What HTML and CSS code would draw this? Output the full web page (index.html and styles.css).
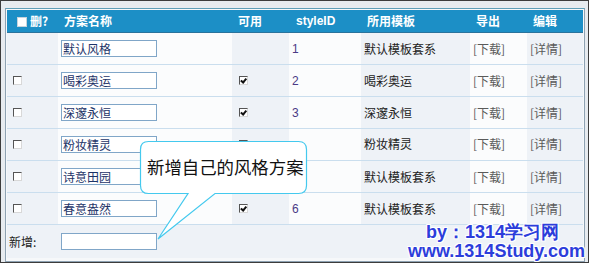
FILE: index.html
```html
<!DOCTYPE html>
<html>
<head>
    <meta charset="UTF-8">
    <title>风格方案管理</title>
    <link rel="stylesheet" href="styles.css">
</head>
<body>
    <div class="frame">
        <div class="panel">
            <table class="styles">
                <colgroup>
                    <col class="c-del"><col class="c-name"><col class="c-on"><col class="c-id">
                    <col class="c-tpl"><col class="c-exp"><col class="c-edit">
                </colgroup>
                <thead>
                    <tr>
                        <th class="th-del"><span class="hbox"></span>删?</th>
                        <th>方案名称</th>
                        <th>可用</th>
                        <th class="latin">styleID</th>
                        <th>所用模板</th>
                        <th>导出</th>
                        <th>编辑</th>
                    </tr>
                </thead>
                <tbody>
                    <tr>
                        <td class="tint"></td>
                        <td><input class="name" type="text" value="默认风格"></td>
                        <td class="tint"></td>
                        <td class="sid">1</td>
                        <td class="tint">默认模板套系</td>
                        <td class="link">[下载]</td>
                        <td class="tint link">[详情]</td>
                    </tr>
                    <tr>
                        <td class="tint chk"><span class="cb"></span></td>
                        <td><input class="name" type="text" value="喝彩奥运"></td>
                        <td class="tint chk2"><span class="cb on"></span></td>
                        <td class="sid">2</td>
                        <td class="tint">喝彩奥运</td>
                        <td class="link">[下载]</td>
                        <td class="tint link">[详情]</td>
                    </tr>
                    <tr>
                        <td class="tint chk"><span class="cb"></span></td>
                        <td><input class="name" type="text" value="深邃永恒"></td>
                        <td class="tint chk2"><span class="cb on"></span></td>
                        <td class="sid">3</td>
                        <td class="tint">深邃永恒</td>
                        <td class="link">[下载]</td>
                        <td class="tint link">[详情]</td>
                    </tr>
                    <tr>
                        <td class="tint chk"><span class="cb"></span></td>
                        <td><input class="name" type="text" value="粉妆精灵"></td>
                        <td class="tint chk2"><span class="cb on"></span></td>
                        <td class="sid"></td>
                        <td class="tint top">粉妆精灵</td>
                        <td class="link top">[下载]</td>
                        <td class="tint link top">[详情]</td>
                    </tr>
                    <tr>
                        <td class="tint chk"><span class="cb"></span></td>
                        <td><input class="name" type="text" value="诗意田园"></td>
                        <td class="tint chk2"><span class="cb on"></span></td>
                        <td class="sid"></td>
                        <td class="tint">默认模板套系</td>
                        <td class="link">[下载]</td>
                        <td class="tint link">[详情]</td>
                    </tr>
                    <tr>
                        <td class="tint chk"><span class="cb"></span></td>
                        <td><input class="name" type="text" value="春意盎然"></td>
                        <td class="tint chk2"><span class="cb on"></span></td>
                        <td class="sid">6</td>
                        <td class="tint">默认模板套系</td>
                        <td class="link">[下载]</td>
                        <td class="tint link">[详情]</td>
                    </tr>
                    <tr class="add">
                        <td class="add-label">新增:</td>
                        <td><input class="name" type="text" value=""></td>
                        <td colspan="5"></td>
                    </tr>
                </tbody>
            </table>
        </div>

        <div class="callout">
            <svg width="172" height="102" viewBox="0 0 172 102">
                <path d="M10.5,1.5 H160.5 Q168.5,1.5 168.5,9.5 V45.5 Q168.5,53.5 160.5,53.5 H77 L20,99 L50,53.5 H10.5 Q2.5,53.5 2.5,45.5 V9.5 Q2.5,1.5 10.5,1.5 Z"
                      fill="#fff" stroke="#44c9ee" stroke-width="1.2"/>
            </svg>
            <span class="callout-text">新增自己的风格方案</span>
        </div>

        <div class="mark">
            <div>by：1314学习网</div>
            <div>www.1314Study.com</div>
        </div>
    </div>
</body>
</html>
```

FILE: styles.css
```css
body {
    margin: 0;
    font-family: "Noto Sans CJK SC", "Liberation Sans", sans-serif;
    font-size: 12px;
    color: #222;
}
.frame {
    position: relative;
    width: 589px;
    height: 263px;
    box-sizing: border-box;
    border: 1px solid #3c3c3c;
    background: #e7ebef;
    padding: 7px 3px 2px 4px;
}
.panel {
    border: 1px solid #8ea2b2;
    border-top-color: #5f9fb8;
    padding: 1px;
    background: #f6f8fa;
    height: 250px;
}
.styles {
    width: 576px;
    border-collapse: collapse;
    table-layout: fixed;
}
.c-del { width: 51px; }
.c-name { width: 174px; }
.c-on { width: 57px; }
.c-id { width: 72px; }
.c-tpl { width: 109px; }
.c-exp { width: 57px; }
.c-edit { width: 56px; }

thead tr {
    background: #1c8fc6;
    border-bottom: 1px solid #2a739c;
}
th {
    height: 22px;
    padding: 0 0 0 6px;
    text-align: left;
    color: #fff;
    font-weight: bold;
    font-size: 12px;
    line-height: 22px;
}
th.latin {
    font-family: "Liberation Sans", sans-serif;
    padding-left: 7px;
}
th.th-del {
    padding-left: 10px;
}
.hbox {
    display: inline-block;
    width: 8px;
    height: 8px;
    background: #fff;
    border: 1px solid #c8d4dc;
    vertical-align: -1px;
    margin-right: 3px;
}

tbody tr {
    height: 32px;
    border-bottom: 1px solid #cadeee;
}
tbody tr.add {
    height: 33px;
    border-bottom: none;
    background: #eef2f7;
}
td {
    padding: 0 0 0 3px;
    background: #fbfcfd;
    vertical-align: middle;
    white-space: nowrap;
}
tr.add td {
    background: transparent;
}
td.tint {
    background: #eef2f7;
}
td.top {
    vertical-align: top;
    padding-top: 6px;
}
td.chk {
    padding-left: 6px;
}
td.chk2 {
    padding-left: 7px;
}
td.sid {
    color: #4a3a86;
    font-family: "Liberation Sans", sans-serif;
}
td.link {
    color: #5a5a5a;
}
td.add-label {
    padding-left: 2px;
}

.name {
    display: block;
    width: 96px;
    height: 17px;
    box-sizing: border-box;
    margin: 0;
    padding: 0 1px;
    border: 1px solid #80a6c8;
    background: #fff;
    font-family: "Noto Sans CJK SC", sans-serif;
    font-size: 12px;
    line-height: 15px;
    color: #1d3468;
    outline: none;
}

.cb {
    display: inline-block;
    width: 9px;
    height: 9px;
    box-sizing: border-box;
    background: #fff;
    border-top: 1px solid #555;
    border-left: 1px solid #555;
    border-right: 1px solid #d8d8d8;
    border-bottom: 1px solid #d8d8d8;
    vertical-align: 1px;
    position: relative;
}
.cb.on::after {
    content: "";
    position: absolute;
    left: 1px;
    top: 2px;
    width: 4px;
    height: 2px;
    border-left: 2px solid #111;
    border-bottom: 2px solid #111;
    transform: rotate(-50deg);
    transform-origin: 2px 2px;
}

.callout {
    position: absolute;
    left: 137px;
    top: 139px;
    width: 172px;
    height: 102px;
}
.callout svg {
    display: block;
}
.callout-text {
    position: absolute;
    left: 9px;
    top: 16px;
    font-size: 17.4px;
    line-height: 22px;
    color: #111;
}

.mark {
    position: absolute;
    left: 407px;
    top: 222px;
    font-family: "Liberation Sans", sans-serif;
    font-weight: bold;
    font-size: 18px;
    line-height: 19px;
    color: #2c3ddb;
    text-shadow: 1px 1px 0 #fff, -1px -1px 0 #fff, 1px -1px 0 #fff, -1px 1px 0 #fff;
}
.mark div:first-child {
    padding-left: 18px;
}
```
